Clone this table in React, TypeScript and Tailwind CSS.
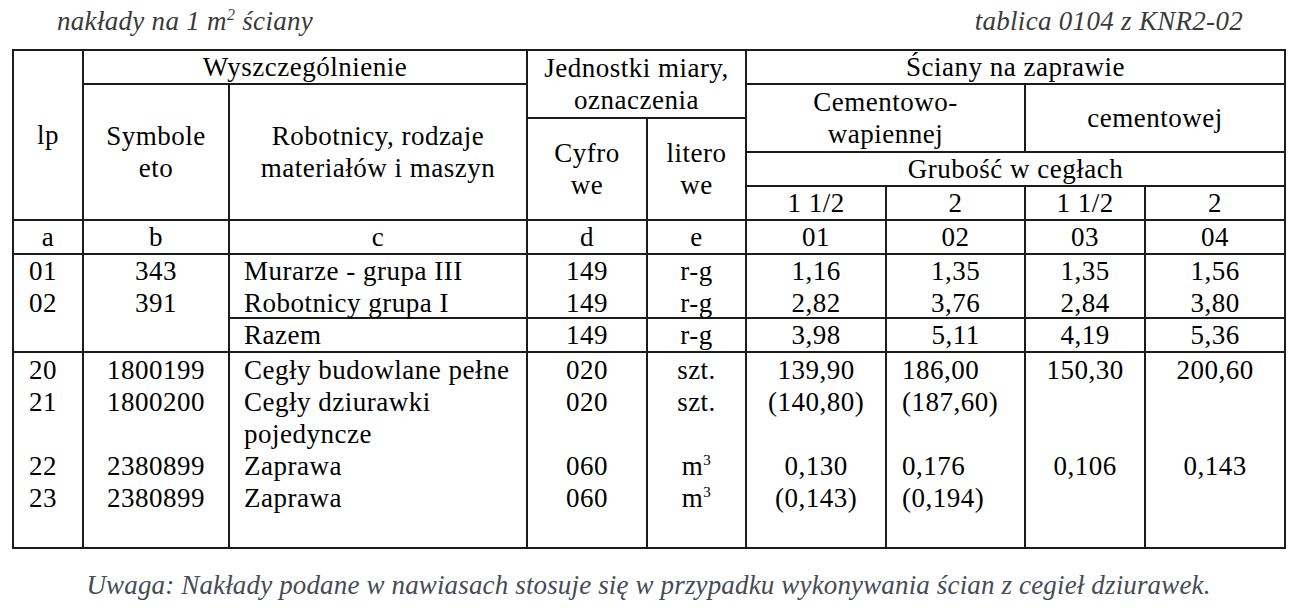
import React from 'react';

const bd = 'border-2 border-[#1c1c1c]';
const hd = `${bd} text-center align-middle font-normal`;

// one line of a body cell; blank lines keep their height
const Lines = ({ items }: { items: React.ReactNode[] }) => (
  <>
    {items.map((t, i) => (
      <div key={i} className="h-[32px] leading-[32px] whitespace-nowrap">
        {t}
      </div>
    ))}
  </>
);

// labour rows sit a little tighter against the "Razem" rule
const Two = ({ items }: { items: React.ReactNode[] }) => (
  <div className="h-[62px]">
    <Lines items={items} />
  </div>
);

const M3 = () => (
  <span>
    m<sup className="text-[15px] -top-[10px]">3</sup>
  </span>
);

export default function App() {
  return (
    <div className="w-[1297px] h-[610px] bg-white font-['Liberation_Serif','Times_New_Roman',serif] text-black">
      {/* caption */}
      <div className="flex justify-between h-[49px] pt-[5px] pl-[57px] pr-[54px] italic text-[27px] leading-[32px] tracking-[0.3px] text-[#3a3a3a]">
        <span>
          nakłady na 1 m<sup className="text-[16px] -top-[10px]">2</sup> ściany
        </span>
        <span>tablica 0104 z KNR2-02</span>
      </div>

      <table className="table-fixed border-collapse w-[1272px] ml-[12px] text-[27px] leading-[32px] tracking-[0.5px]">
        <colgroup>
          <col className="w-[70px]" />
          <col className="w-[146px]" />
          <col className="w-[298px]" />
          <col className="w-[120px]" />
          <col className="w-[99px]" />
          <col className="w-[140px]" />
          <col className="w-[139px]" />
          <col className="w-[120px]" />
          <col className="w-[140px]" />
        </colgroup>
        <tbody>
          <tr className="h-[34px]">
            <td rowSpan={5} className={hd}>lp</td>
            <td colSpan={2} className={hd}>Wyszczególnienie</td>
            <td colSpan={2} rowSpan={2} className={hd}>
              Jednostki miary,
              <br />
              oznaczenia
            </td>
            <td colSpan={4} className={hd}>Ściany na zaprawie</td>
          </tr>
          <tr className="h-[34px]">
            <td rowSpan={4} className={hd}>
              Symbole
              <br />
              eto
            </td>
            <td rowSpan={4} className={hd}>
              Robotnicy, rodzaje
              <br />
              materiałów i maszyn
            </td>
            <td colSpan={2} rowSpan={2} className={hd}>
              Cementowo-
              <br />
              wapiennej
            </td>
            <td colSpan={2} rowSpan={2} className={hd}>cementowej</td>
          </tr>
          <tr className="h-[34px]">
            <td rowSpan={3} className={hd}>
              Cyfro
              <br />
              we
            </td>
            <td rowSpan={3} className={hd}>
              litero
              <br />
              we
            </td>
          </tr>
          <tr className="h-[34px]">
            <td colSpan={4} className={hd}>Grubość w cegłach</td>
          </tr>
          <tr className="h-[33px]">
            <td className={hd}>1 1/2</td>
            <td className={hd}>2</td>
            <td className={hd}>1 1/2</td>
            <td className={hd}>2</td>
          </tr>
          <tr className="h-[34px]">
            {['a', 'b', 'c', 'd', 'e', '01', '02', '03', '04'].map((l) => (
              <td key={l} className={hd}>{l}</td>
            ))}
          </tr>

          {/* robocizna */}
          <tr className="align-top">
            <td rowSpan={2} className={`${bd} pl-[15px]`}>
              <Lines items={['01', '02']} />
            </td>
            <td rowSpan={2} className={`${bd} text-center`}>
              <Lines items={['343', '391']} />
            </td>
            <td className={`${bd} pl-[14px]`}>
              <Two items={['Murarze - grupa III', 'Robotnicy grupa I']} />
            </td>
            <td className={`${bd} text-center`}>
              <Two items={['149', '149']} />
            </td>
            <td className={`${bd} text-center`}>
              <Two items={['r-g', 'r-g']} />
            </td>
            {[
              ['1,16', '2,82'],
              ['1,35', '3,76'],
              ['1,35', '2,84'],
              ['1,56', '3,80'],
            ].map((v, i) => (
              <td key={i} className={`${bd} text-center`}>
                <Two items={v} />
              </td>
            ))}
          </tr>
          <tr className="align-top">
            <td className={`${bd} pl-[14px]`}>
              <Lines items={['Razem']} />
            </td>
            <td className={`${bd} text-center`}>
              <Lines items={['149']} />
            </td>
            <td className={`${bd} text-center`}>
              <Lines items={['r-g']} />
            </td>
            {['3,98', '5,11', '4,19', '5,36'].map((v) => (
              <td key={v} className={`${bd} text-center`}>
                <Lines items={[v]} />
              </td>
            ))}
          </tr>

          {/* materiały */}
          <tr className="h-[196px] align-top">
            <td className={`${bd} pl-[15px] pt-[1px]`}>
              <Lines items={['20', '21', '', '22', '23']} />
            </td>
            <td className={`${bd} text-center pt-[1px]`}>
              <Lines items={['1800199', '1800200', '', '2380899', '2380899']} />
            </td>
            <td className={`${bd} pl-[14px] pt-[1px]`}>
              <Lines items={['Cegły budowlane pełne', 'Cegły dziurawki', 'pojedyncze', 'Zaprawa', 'Zaprawa']} />
            </td>
            <td className={`${bd} text-center pt-[1px]`}>
              <Lines items={['020', '020', '', '060', '060']} />
            </td>
            <td className={`${bd} text-center pt-[1px]`}>
              <Lines items={['szt.', 'szt.', '', <M3 key="a" />, <M3 key="b" />]} />
            </td>
            <td className={`${bd} text-center pt-[1px]`}>
              <Lines items={['139,90', '(140,80)', '', '0,130', '(0,143)']} />
            </td>
            <td className={`${bd} pl-[15px] pt-[1px]`}>
              <Lines items={['186,00', '(187,60)', '', '0,176', '(0,194)']} />
            </td>
            <td className={`${bd} text-center pt-[1px]`}>
              <Lines items={['150,30', '', '', '0,106', '']} />
            </td>
            <td className={`${bd} text-center pt-[1px]`}>
              <Lines items={['200,60', '', '', '0,143', '']} />
            </td>
          </tr>
        </tbody>
      </table>

      <p className="mt-[20px] text-center italic text-[27px] leading-[32px] tracking-[0.15px] text-[#454b57]">
        Uwaga: Nakłady podane w nawiasach stosuje się w przypadku wykonywania ścian z cegieł dziurawek.
      </p>
    </div>
  );
}
